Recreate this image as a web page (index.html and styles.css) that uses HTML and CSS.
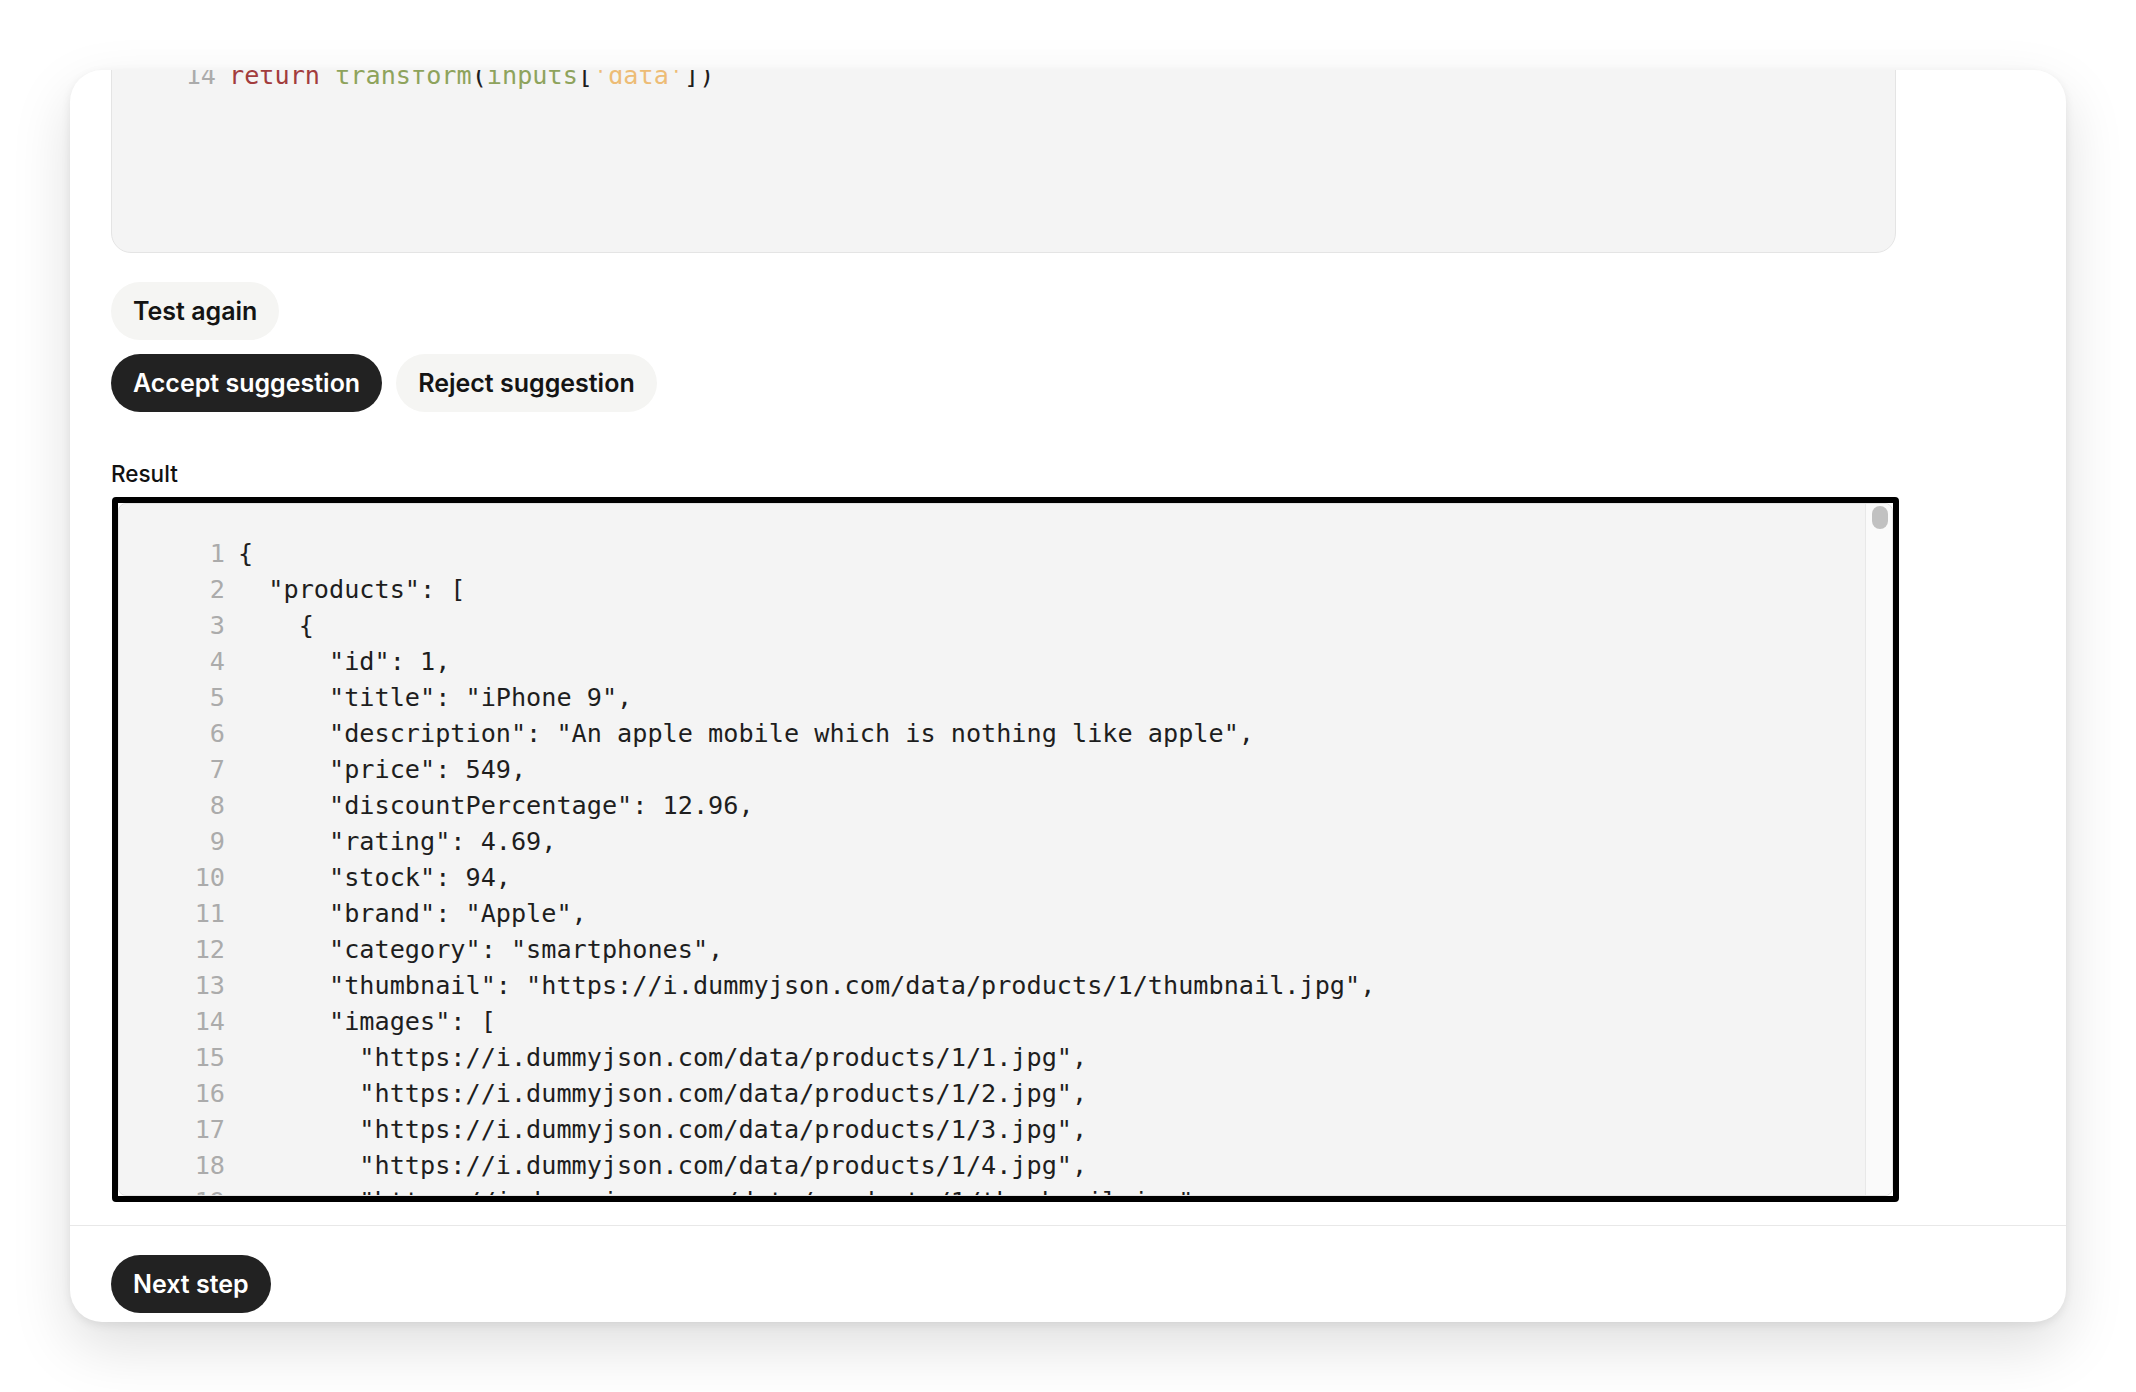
FILE: index.html
```html
<!DOCTYPE html>
<html lang="en">
<head>
<meta charset="utf-8">
<title>Transform step</title>
<link rel="stylesheet" href="styles.css">
</head>
<body>
<div class="card">
  <div class="scroll">
    <div class="content">
      <div class="editor">
        <div class="line"><span class="ln">14</span><span class="code"><span class="kw">return</span> <span class="fn">transform</span>(<span class="fn">inputs</span>[<span class="str">'data'</span>])</span></div>
      </div>
      <div class="actions">
        <div class="row"><button class="btn light">Test again</button></div>
        <div class="row"><button class="btn dark">Accept suggestion</button><button class="btn light">Reject suggestion</button></div>
      </div>
      <div class="label">Result</div>
      <div class="result">
        <div class="result-inner">
          <div class="lines">
            <div class="line"><span class="ln">1</span><span class="code">{</span></div>
            <div class="line"><span class="ln">2</span><span class="code">  "products": [</span></div>
            <div class="line"><span class="ln">3</span><span class="code">    {</span></div>
            <div class="line"><span class="ln">4</span><span class="code">      "id": 1,</span></div>
            <div class="line"><span class="ln">5</span><span class="code">      "title": "iPhone 9",</span></div>
            <div class="line"><span class="ln">6</span><span class="code">      "description": "An apple mobile which is nothing like apple",</span></div>
            <div class="line"><span class="ln">7</span><span class="code">      "price": 549,</span></div>
            <div class="line"><span class="ln">8</span><span class="code">      "discountPercentage": 12.96,</span></div>
            <div class="line"><span class="ln">9</span><span class="code">      "rating": 4.69,</span></div>
            <div class="line"><span class="ln">10</span><span class="code">      "stock": 94,</span></div>
            <div class="line"><span class="ln">11</span><span class="code">      "brand": "Apple",</span></div>
            <div class="line"><span class="ln">12</span><span class="code">      "category": "smartphones",</span></div>
            <div class="line"><span class="ln">13</span><span class="code">      "thumbnail": "https://i.dummyjson.com/data/products/1/thumbnail.jpg",</span></div>
            <div class="line"><span class="ln">14</span><span class="code">      "images": [</span></div>
            <div class="line"><span class="ln">15</span><span class="code">        "https://i.dummyjson.com/data/products/1/1.jpg",</span></div>
            <div class="line"><span class="ln">16</span><span class="code">        "https://i.dummyjson.com/data/products/1/2.jpg",</span></div>
            <div class="line"><span class="ln">17</span><span class="code">        "https://i.dummyjson.com/data/products/1/3.jpg",</span></div>
            <div class="line"><span class="ln">18</span><span class="code">        "https://i.dummyjson.com/data/products/1/4.jpg",</span></div>
            <div class="line"><span class="ln">19</span><span class="code">        "https://i.dummyjson.com/data/products/1/thumbnail.jpg"</span></div>
            <div class="line"><span class="ln">20</span><span class="code">      ]</span></div>
          </div>
          <div class="track"><div class="thumb"></div></div>
        </div>
      </div>
    </div>
  </div>
  <div class="footer"><button class="btn dark">Next step</button></div>
</div>
</body>
</html>
```

FILE: styles.css
```css
* { box-sizing: border-box; }
html, body { margin: 0; padding: 0; background: #ffffff; }
body {
  font-family: "Inter", "Liberation Sans", sans-serif;
  color: #111111;
}
.card {
  margin: 70px;
  height: 1252px;
  background: #ffffff;
  border-radius: 32px;
  box-shadow: 0 3px 10px rgba(0, 0, 0, 0.08), 0 24px 60px rgba(0, 0, 0, 0.13);
  display: flex;
  flex-direction: column;
  overflow: hidden;
}
.scroll {
  flex: 1;
  overflow: hidden;
  min-height: 0;
}
.content {
  padding-left: 41px;
  width: 1829px;
}
.editor {
  margin-top: -40px;
  margin-right: 3px;
  height: 223px;
  padding-top: 27px;
  background: #f4f4f4;
  border: 1px solid #e4e4e4;
  border-radius: 20px;
}
.editor .line {
  margin-left: -2px;
}
.line {
  display: flex;
  height: 36px;
  line-height: 36px;
  font-family: "DejaVu Sans Mono", "Liberation Mono", monospace;
  font-size: 25.2px;
  white-space: pre;
}
.ln {
  width: 106px;
  flex: none;
  text-align: right;
  color: #ababab;
}
.code {
  padding-left: 13px;
  color: #1e1e1e;
}
.kw { color: #a23c3d; }
.fn { color: #8ea35c; }
.str { color: #edbc76; }

.actions {
  margin-top: 29px;
  display: flex;
  flex-direction: column;
  gap: 14px;
}
.row {
  display: flex;
  gap: 14px;
}
.btn {
  height: 58px;
  padding: 0 22px;
  border: none;
  border-radius: 29px;
  font-family: "Inter", "Liberation Sans", sans-serif;
  font-size: 25px;
  font-weight: 600;
  line-height: 58px;
}
.btn.light { background: #f5f5f3; color: #141414; }
.btn.dark { background: #222222; color: #ffffff; }

.label {
  margin-top: 49px;
  font-size: 22.5px;
  line-height: 26px;
  font-weight: 500;
  color: #111111;
}
.result {
  margin-top: 10px;
  margin-left: 1px;
  height: 705px;
  border: 6px solid #000000;
  border-radius: 4px;
  background: #ffffff;
}
.result-inner {
  height: 100%;
  display: flex;
  background: #f4f4f4;
  border: 1px solid #e3e3e3;
  border-radius: 8px;
  overflow: hidden;
}
.lines {
  flex: 1;
  padding-top: 32px;
  overflow: hidden;
}
.track {
  width: 27px;
  flex: none;
  background: #fafafa;
  border-left: 1px solid #e8e8e8;
  padding: 2px 3px 0 6px;
}
.thumb {
  width: 16px;
  height: 23px;
  border-radius: 8px;
  background: #c1c1c1;
}
.footer {
  flex: none;
  border-top: 1px solid #e8e8e8;
  padding: 29px 41px 9px;
}
```
